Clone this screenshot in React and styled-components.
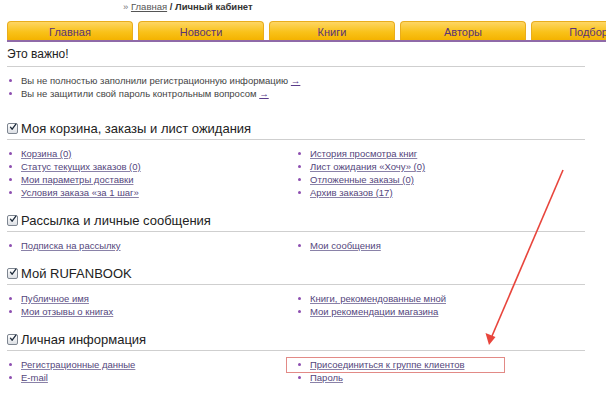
import styled, { createGlobalStyle } from "styled-components";

const GlobalStyle = createGlobalStyle`
body {
    margin: 0;
    background: #fff;
    font-family: "Liberation Sans", Arial, sans-serif;
    overflow: hidden;
}
`;

const tabs = ["Главная", "Новости", "Книги", "Авторы", "Подборки"];

const sections = [
    {
        title: "Моя корзина, заказы и лист ожидания",
        left: ["Корзина (0)", "Статус текущих заказов (0)", "Мои параметры доставки", "Условия заказа «за 1 шаг»"],
        right: ["История просмотра книг", "Лист ожидания «Хочу» (0)", "Отложенные заказы (0)", "Архив заказов (17)"],
    },
    {
        title: "Рассылка и личные сообщения",
        left: ["Подписка на рассылку"],
        right: ["Мои сообщения"],
    },
    {
        title: "Мой RUFANBOOK",
        left: ["Публичное имя", "Мои отзывы о книгах"],
        right: ["Книги, рекомендованные мной", "Мои рекомендации магазина"],
    },
    {
        title: "Личная информация",
        left: ["Регистрационные данные", "E-mail"],
        right: ["Присоединиться к группе клиентов", "Пароль"],
    },
];

const CheckIcon = () => (
    <svg width="10" height="10" viewBox="0 0 10 10">
        <path d="M1.8 5.2 L4 7.8 L8.6 1.4" fill="none" stroke="#1d2a3a" strokeWidth="1.6" strokeLinecap="round" strokeLinejoin="round" />
    </svg>
);

const App = () => {
    return <Page>
        <GlobalStyle />

        <Breadcrumb>
            <Raquo>»</Raquo> <CrumbLink href="#">Главная</CrumbLink> <Current>/ Личный кабинет</Current>
        </Breadcrumb>

        <TabBar>
            {tabs.map((t) => <Tab key={t}>{t}</Tab>)}
        </TabBar>

        <Content>
            <Section $gap={0}>
                <PlainHeading>Это важно!</PlainHeading>
                <NoticeList>
                    <Item>Вы не полностью заполнили регистрационную информацию <Arrow href="#">→</Arrow></Item>
                    <Item>Вы не защитили свой пароль контрольным вопросом <Arrow href="#">→</Arrow></Item>
                </NoticeList>
            </Section>

            {sections.map((s, i) => (
                <Section key={s.title} $gap={i === 0 ? 17 : 10}>
                    <Heading>
                        <CheckBox><CheckIcon /></CheckBox>
                        {s.title}
                    </Heading>
                    <Columns>
                        <Column>
                            {s.left.map((l) => <Item key={l}><LinkText href="#">{l}</LinkText></Item>)}
                        </Column>
                        <Column>
                            {s.right.map((l) => <Item key={l}><LinkText href="#">{l}</LinkText></Item>)}
                        </Column>
                    </Columns>
                </Section>
            ))}
        </Content>

        {/* annotation drawn over the screenshot */}
        <Highlight />
        <Annotation width="606" height="396" viewBox="0 0 606 396">
            <line x1="563" y1="170" x2="492" y2="336" stroke="#e8453c" strokeWidth="1.6" />
            <polygon points="489,345 485.5,333 495.5,337" fill="#e8453c" />
        </Annotation>
    </Page>
}

export default App;

const Page = styled.div`
position: relative;
width: 606px;
height: 396px;
overflow: hidden;
`;

const Breadcrumb = styled.div`
height: 21px;
box-sizing: border-box;
padding: 0 0 0 123px;
font-size: 9.5px;
line-height: 13px;
color: #666;
`;

const Raquo = styled.span`
color: #777;
`;

const CrumbLink = styled.a`
color: #555;
text-decoration: underline;
`;

const Current = styled.b`
color: #333;
`;

const TabBar = styled.div`
display: flex;
gap: 5px;
margin-left: 7px;
width: 700px;
border-bottom: 2px solid #8f6aa8;
`;

const Tab = styled.div`
flex: 0 0 126px;
height: 19px;
box-sizing: border-box;
display: flex;
align-items: center;
justify-content: center;
font-size: 11px;
color: #5a3474;
background: linear-gradient(#fed664, #f9c21a 55%, #f4b300);
border: 1px solid #e9ad1c;
border-bottom: none;
border-radius: 4px 4px 0 0;
padding-top: 1px;
`;

const Content = styled.div`
margin-left: 7px;
width: 578px;
`;

const Section = styled.section`
margin-top: ${(p) => p.$gap}px;
`;

const PlainHeading = styled.div`
height: 24px;
display: flex;
align-items: center;
font-size: 12px;
color: #222;
border-bottom: 1px solid #cfcfcf;
`;

const Heading = styled.div`
height: 22px;
display: flex;
align-items: center;
gap: 3px;
font-size: 13px;
color: #222;
border-bottom: 1px solid #cfcfcf;
`;

const CheckBox = styled.span`
width: 11px;
height: 11px;
box-sizing: border-box;
display: inline-flex;
align-items: center;
justify-content: center;
border: 1px solid #7d8590;
border-radius: 2px;
background: linear-gradient(#fff, #dcdfe4);
svg { display: block; margin-top: -2px; margin-left: 1px; }
`;

const NoticeList = styled.ul`
list-style: none;
margin: 7px 0 0;
padding: 0;
color: #444;
`;

const Columns = styled.div`
display: flex;
margin-top: 7px;
`;

const Column = styled.ul`
list-style: none;
margin: 0;
padding: 0;
width: 291px;
`;

const Item = styled.li`
position: relative;
padding-left: 14px;
height: 13px;
line-height: 13px;
font-size: 9.5px;
white-space: nowrap;
&::before {
    content: "";
    position: absolute;
    left: 2px;
    top: 5px;
    width: 3px;
    height: 3px;
    border-radius: 50%;
    background: #8d4fb0;
}
`;

const LinkText = styled.a`
color: #54467c;
text-decoration: underline;
text-decoration-color: #8a82a8;
`;

const Arrow = styled.a`
color: #5a3c8a;
text-decoration: underline;
`;

const Highlight = styled.div`
position: absolute;
left: 286px;
top: 357px;
width: 219px;
height: 16px;
box-sizing: border-box;
border: 1px solid #e28a86;
`;

const Annotation = styled.svg`
position: absolute;
left: 0;
top: 0;
pointer-events: none;
`;
